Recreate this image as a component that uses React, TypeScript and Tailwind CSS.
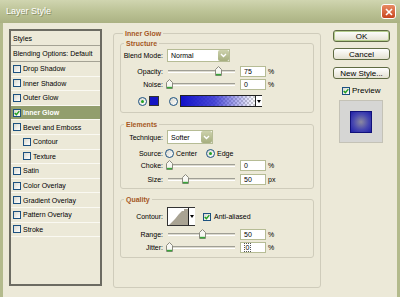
import React from 'react';

type Item = { label: string; checked?: boolean; selected?: boolean; indent?: boolean };

const items: Item[] = [
  { label: 'Drop Shadow' },
  { label: 'Inner Shadow' },
  { label: 'Outer Glow' },
  { label: 'Inner Glow', checked: true, selected: true },
  { label: 'Bevel and Emboss' },
  { label: 'Contour', indent: true },
  { label: 'Texture', indent: true },
  { label: 'Satin' },
  { label: 'Color Overlay' },
  { label: 'Gradient Overlay' },
  { label: 'Pattern Overlay' },
  { label: 'Stroke' },
];

const CheckBox = ({ checked }: { checked?: boolean }) => (
  <span className="w-[8px] h-[8px] shrink-0 border border-[#1c5180] bg-gradient-to-br from-[#d8d8cf] to-white flex items-center justify-center">
    {checked && (
      <svg width="6" height="6" viewBox="0 0 6 6">
        <path d="M0.7 2.9 L2.4 4.6 L5.3 1.1" stroke="#21a121" strokeWidth="1.4" fill="none" />
      </svg>
    )}
  </span>
);

const Radio = ({ on }: { on?: boolean }) => (
  <span className="w-[9px] h-[9px] shrink-0 rounded-full border border-[#1c5180] bg-gradient-to-br from-[#d8d8cf] to-white flex items-center justify-center">
    {on && <span className="w-[3px] h-[3px] rounded-full bg-[#21a121]" />}
  </span>
);

const DropButton = () => (
  <span className="w-[11px] h-full shrink-0 rounded-[2px] bg-gradient-to-b from-[#cdd2ad] to-[#a6ae7e] flex items-center justify-center">
    <svg width="7" height="5" viewBox="0 0 7 5">
      <path d="M1 1 L3.5 3.5 L6 1" stroke="#fff" strokeWidth="1.4" fill="none" />
    </svg>
  </span>
);

const SmallArrow = () => (
  <span className="w-[7px] h-full shrink-0 bg-white border-l border-[#222] flex items-center justify-center">
    <svg width="4" height="3" viewBox="0 0 4 3">
      <path d="M0 0 H4 L2 3 Z" fill="#000" />
    </svg>
  </span>
);

const Slider = ({ pos }: { pos: number }) => (
  <div className="relative w-[69px] h-[11px] flex items-center px-[1px]">
    <div className="w-full h-[3px] border-t border-[#a09f95] border-b border-b-white bg-[#dddbd0]" />
    <svg className="absolute top-[0px]" style={{ left: `${pos - 3}px` }} width="7" height="10" viewBox="0 0 7 10">
      <path d="M0.5 9.5 V3.5 L3.5 0.5 L6.5 3.5 V9.5 Z" fill="#f7f7f2" stroke="#8b8a7f" />
      <path d="M1 8.6 H6" stroke="#3aa53a" strokeWidth="1.6" />
    </svg>
  </div>
);

const Field = ({ value, cursor }: { value: string; cursor?: boolean }) => (
  <span className="ml-[4px] w-[26px] h-[11px] border border-[#b6bc95] bg-white pl-[3px] flex items-center">
    {cursor ? <span className="border border-dotted border-[#555] px-[0.5px] leading-[7px]">{value}</span> : value}
  </span>
);

const Label = ({ children }: { children: React.ReactNode }) => (
  <span className="w-[42px] shrink-0 text-right">{children}</span>
);

const SliderRow = ({ label, pos, value, unit, cursor, className }: { label: string; pos: number; value: string; unit: string; cursor?: boolean; className: string }) => (
  <div className={`flex items-center h-[11px] ${className}`}>
    <Label>{label}</Label>
    <div className="ml-[4px] flex items-center">
      <Slider pos={pos} />
      <Field value={value} cursor={cursor} />
      <span className="ml-[2px]">{unit}</span>
    </div>
  </div>
);

const Legend = ({ children }: { children: React.ReactNode }) => (
  <legend className="ml-[3px] px-[2px] leading-[9px] font-bold text-[#a5581f]">{children}</legend>
);

const Button = ({ children, primary }: { children: React.ReactNode; primary?: boolean }) => (
  <div
    className={`w-[57px] h-[12px] rounded-[3px] border border-[#5f6b43] bg-gradient-to-b from-white to-[#e4e1d1] flex items-center justify-center text-[8px] ${
      primary ? 'shadow-[inset_0_0_0_1px_#b5cd8d]' : ''
    }`}
  >
    {children}
  </div>
);

export default function App() {
  return (
    <div className="w-[400px] h-[297px] overflow-hidden bg-[#b3ba8c] font-['Liberation_Sans',Arial,sans-serif] text-[7px] leading-[9px] text-black">
      {/* Title bar */}
      <div className="h-[23px] bg-gradient-to-b from-[#d0d5b0] via-[#bcc396] to-[#abb283] flex items-center justify-between pl-[6px] pr-[4px]">
        <span className="text-[9px] leading-[11px] text-white [text-shadow:1px_1px_0_#8a9168]">Layer Style</span>
        <span className="w-[15px] h-[15px] rounded-[3px] border border-white bg-gradient-to-b from-[#e88a62] to-[#c8441c] flex items-center justify-center">
          <svg width="8" height="8" viewBox="0 0 8 8">
            <path d="M1 1 L7 7 M7 1 L1 7" stroke="#fff" strokeWidth="1.6" />
          </svg>
        </span>
      </div>

      <div className="mx-[3px] h-[274px] bg-[#ece9d8] flex items-start pt-[6px] pl-[6px]">
        {/* Styles list */}
        <div className="w-[93px] h-[257px] shrink-0 border-2 border-[#6c6b62] flex flex-col">
          <div className="h-[15px] border-b border-[#a4a294] pl-[2px] flex items-center">Styles</div>
          <div className="h-[16px] border-b border-[#a4a294] pl-[2px] flex items-center">Blending Options: Default</div>
          {items.map((it) => (
            <div
              key={it.label}
              className={`h-[14.6px] border-b border-[#faf9f2] flex items-center ${it.indent ? 'pl-[12px]' : 'pl-[2px]'} ${
                it.selected ? 'bg-[#929e6d] text-white font-bold' : ''
              }`}
            >
              <CheckBox checked={it.checked} />
              <span className="ml-[2px]">{it.label}</span>
            </div>
          ))}
        </div>

        {/* Inner Glow panel */}
        <fieldset className="ml-[11px] w-[208px] h-[259px] shrink-0 border border-[#cfccbb] rounded-[3px] px-[6px] pt-[1px]">
          <Legend>Inner Glow</Legend>

          <fieldset className="border border-[#cfccbb] rounded-[3px] pb-[5px]">
            <Legend>Structure</Legend>
            <div className="mt-[1px] h-[13px] flex items-center">
              <Label>Blend Mode:</Label>
              <div className="ml-[4px] w-[63px] h-[13px] border border-[#b6bc95] bg-white flex items-center justify-between">
                <span className="pl-[3px]">Normal</span>
                <DropButton />
              </div>
            </div>
            <SliderRow className="mt-[4px]" label="Opacity:" pos={51} value="75" unit="%" />
            <SliderRow className="mt-[2px]" label="Noise:" pos={2} value="0" unit="%" />
            <div className="mt-[5px] h-[12px] flex items-center pl-[17px]">
              <Radio on />
              <span className="ml-[2px] w-[10px] h-[10px] border border-[#333] bg-[#1414c4]" />
              <span className="ml-[10px]">
                <Radio />
              </span>
              <span className="ml-[2px] w-[82px] h-[12px] border border-[#222] flex">
                <svg width="74" height="10" viewBox="0 0 74 10" className="shrink-0">
                  <defs>
                    <pattern id="chk" width="4" height="4" patternUnits="userSpaceOnUse">
                      <rect width="4" height="4" fill="#fff" />
                      <rect width="2" height="2" fill="#cfcfcf" />
                      <rect x="2" y="2" width="2" height="2" fill="#cfcfcf" />
                    </pattern>
                    <linearGradient id="gb" x1="0" x2="1">
                      <stop offset="0" stopColor="#1010c8" />
                      <stop offset="0.45" stopColor="#2a2ad0" stopOpacity="0.85" />
                      <stop offset="1" stopColor="#3030d0" stopOpacity="0" />
                    </linearGradient>
                  </defs>
                  <rect width="74" height="10" fill="url(#chk)" />
                  <rect width="74" height="10" fill="url(#gb)" />
                </svg>
                <SmallArrow />
              </span>
            </div>
          </fieldset>

          <fieldset className="mt-[7px] border border-[#cfccbb] rounded-[3px] pb-[3px]">
            <Legend>Elements</Legend>
            <div className="mt-[1px] h-[14px] flex items-center">
              <Label>Technique:</Label>
              <div className="ml-[4px] w-[46px] h-[14px] border border-[#b6bc95] bg-white flex items-center justify-between">
                <span className="pl-[3px]">Softer</span>
                <DropButton />
              </div>
            </div>
            <div className="mt-[4px] h-[10px] flex items-center">
              <Label>Source:</Label>
              <span className="ml-[2px]">
                <Radio />
              </span>
              <span className="ml-[2px]">Center</span>
              <span className="ml-[9px]">
                <Radio on />
              </span>
              <span className="ml-[2px]">Edge</span>
            </div>
            <SliderRow className="mt-[2px]" label="Choke:" pos={2} value="0" unit="%" />
            <SliderRow className="mt-[3px]" label="Size:" pos={18} value="50" unit="px" />
          </fieldset>

          <fieldset className="mt-[6px] border border-[#cfccbb] rounded-[3px] pb-[4px]">
            <Legend>Quality</Legend>
            <div className="mt-[3px] h-[19px] flex items-center">
              <Label>Contour:</Label>
              <div className="ml-[4px] w-[28px] h-[19px] border border-[#333] bg-white flex">
                <svg width="20" height="17" viewBox="0 0 20 17" className="shrink-0">
                  <polygon points="1,17 7,11 11,6 14,3 16,3 16,1 20,1 20,17" fill="#a9a393" />
                </svg>
                <SmallArrow />
              </div>
              <span className="ml-[8px]">
                <CheckBox checked />
              </span>
              <span className="ml-[3px]">Anti-aliased</span>
            </div>
            <SliderRow className="mt-[3px]" label="Range:" pos={35} value="50" unit="%" />
            <SliderRow className="mt-[2px]" label="Jitter:" pos={2} value="0" unit="%" cursor />
          </fieldset>
        </fieldset>

        {/* Buttons */}
        <div className="ml-[12px] mt-[1px] w-[57px] flex flex-col">
          <Button primary>OK</Button>
          <div className="mt-[6px]">
            <Button>Cancel</Button>
          </div>
          <div className="mt-[7px]">
            <Button>New Style...</Button>
          </div>
          <div className="mt-[7px] flex items-center pl-[9px] text-[8px]">
            <CheckBox checked />
            <span className="ml-[2px]">Preview</span>
          </div>
          <div className="mt-[5px] ml-[6px] w-[44px] h-[43px] bg-[#d6d6d4] border border-[#c4c2b6] flex items-center justify-center">
            <span className="w-[22px] h-[22px] border border-[#10107a] bg-[radial-gradient(circle,#8c8aa0_0%,#4848b0_55%,#2020a8_100%)]" />
          </div>
        </div>
      </div>
    </div>
  );
}
